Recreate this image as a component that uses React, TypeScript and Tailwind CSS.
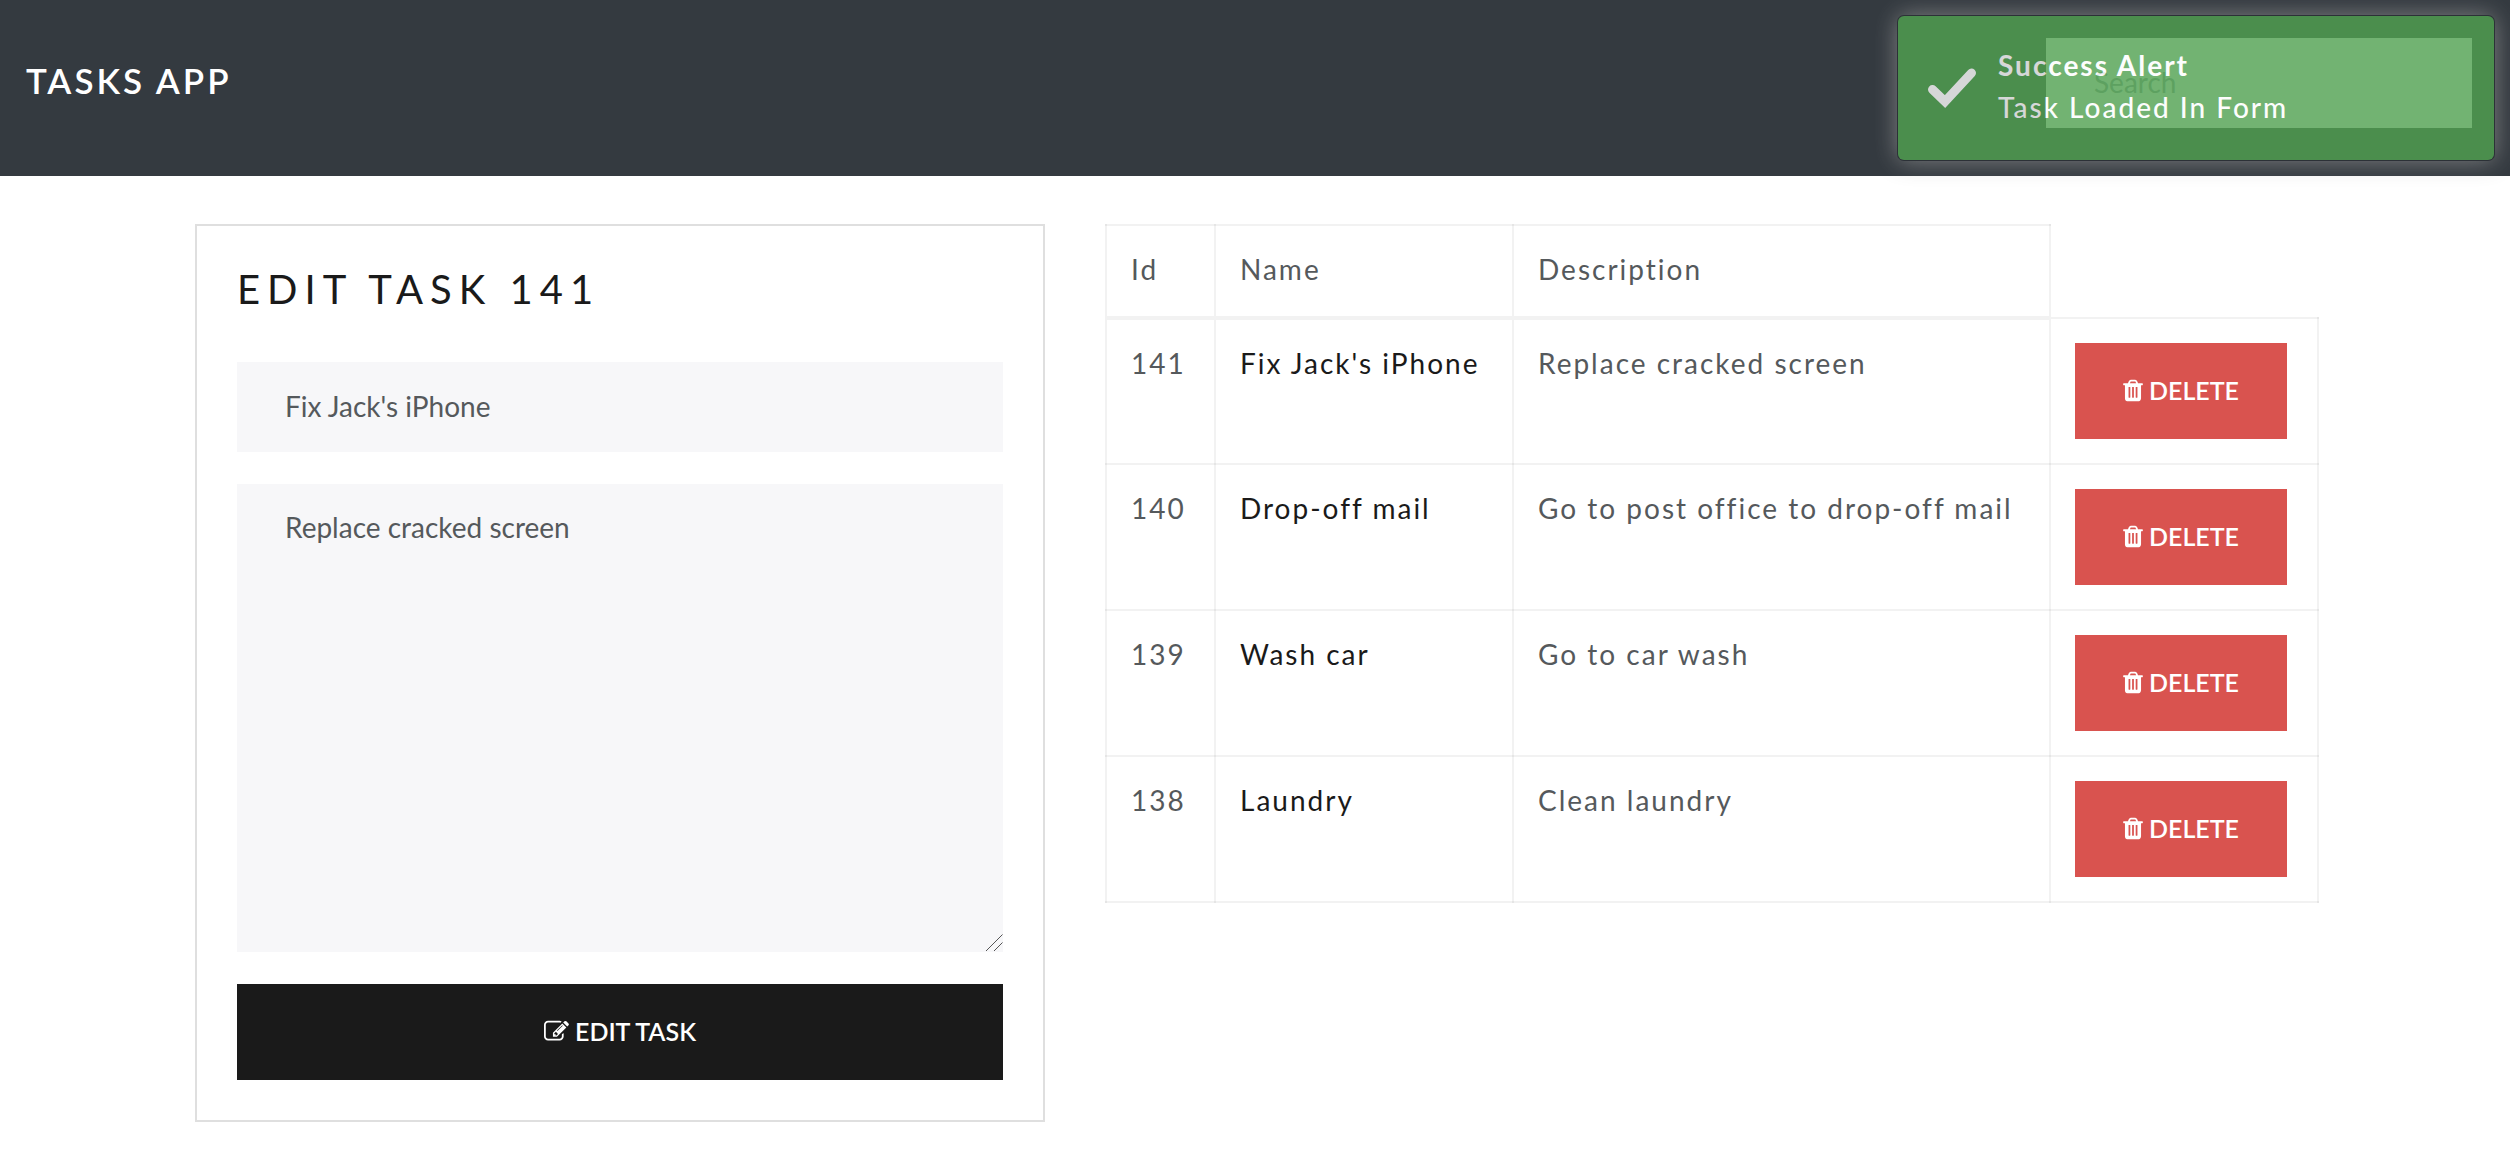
type Task = { id: number; name: string; description: string };

const tasks: Task[] = [
  { id: 141, name: "Fix Jack's iPhone", description: "Replace cracked screen" },
  { id: 140, name: "Drop-off mail", description: "Go to post office to drop-off mail" },
  { id: 139, name: "Wash car", description: "Go to car wash" },
  { id: 138, name: "Laundry", description: "Clean laundry" },
];

function TrashIcon() {
  return (
    <svg viewBox="0 0 1408 1792" className="h-[25px] w-5 fill-current" aria-hidden="true">
      <path d="M512 1376v-704q0-14-9-23t-23-9h-64q-14 0-23 9t-9 23v704q0 14 9 23t23 9h64q14 0 23-9t9-23zM768 1376v-704q0-14-9-23t-23-9h-64q-14 0-23 9t-9 23v704q0 14 9 23t23 9h64q14 0 23-9t9-23zM1024 1376v-704q0-14-9-23t-23-9h-64q-14 0-23 9t-9 23v704q0 14 9 23t23 9h64q14 0 23-9t9-23zM480 384h448l-48-117q-7-9-17-11h-317q-10 2-17 11zM1408 416v64q0 14-9 23t-23 9h-96v948q0 83-47 143.500t-113 60.500h-832q-66 0-113-58.500t-47-141.500v-952h-96q-14 0-23-9t-9-23v-64q0-14 9-23t23-9h309l70-167q15-37 54-63t79-26h320q40 0 79 26t54 63l70 167h309q14 0 23 9t9 23z" />
    </svg>
  );
}

function EditIcon() {
  return (
    <svg viewBox="0 0 1792 1792" className="size-[25px] fill-current" aria-hidden="true">
      <path d="M888 1184l116-116-152-152-116 116v56h96v96h56zM1328 464q-16-16-33 1l-350 350q-17 17-1 33t33-1l350-350q17-17 1-33zM1408 1058v190q0 119-84.500 203.500t-203.500 84.500h-832q-119 0-203.500-84.500t-84.500-203.500v-832q0-119 84.500-203.500t203.500-84.500h832q63 0 117 25 15 7 18 23 3 17-9 29l-49 49q-14 14-32 8-23-6-45-6h-832q-66 0-113 47t-47 113v832q0 66 47 113t113 47h832q66 0 113-47t47-113v-126q0-13 9-22l64-64q15-15 35-7t20 29zM1312 320l288 288-672 672h-288v-288zM1756 452l-92 92-288-288 92-92q28-28 68-28t68 28l152 152q28 28 28 68t-28 68z" />
    </svg>
  );
}

function Toast() {
  return (
    <div
      role="alert"
      className="absolute top-4 right-4 flex w-[596px] items-center gap-[22px] rounded-md bg-[#51a351] px-[30px] pt-7 pb-8 tracking-[2px] text-white opacity-80 shadow-[0_0_0_1px_#2b2f36,0_0_24px_#999]"
    >
      <svg viewBox="0 0 48 48" className="size-12" aria-hidden="true">
        <path d="M4.500 27.500 17 39.500 43.500 11" fill="none" stroke="currentColor" strokeWidth="9" strokeLinecap="round" />
      </svg>
      <div>
        <p className="font-bold">Success Alert</p>
        <p className="font-medium">Task Loaded In Form</p>
      </div>
    </div>
  );
}

export default function App() {
  return (
    <div className="relative bg-white font-[Lato,sans-serif] text-[28px] leading-[42px] font-normal text-[#55595c]">
      <header className="flex h-44 items-center justify-between bg-[#343a40] pr-[38px] pl-[26px]">
        <a href="#" className="pb-4 text-[35px] leading-[52px] font-semibold tracking-[3px] text-white uppercase">
          Tasks App
        </a>
        <input
          type="search"
          aria-label="Search"
          placeholder="Search"
          className="mb-[10px] h-[90px] w-[426px] bg-[#f7f7f9] px-12 pb-0.5 placeholder:text-[#919aa1]"
        />
      </header>

      <main className="grid grid-cols-[850fr_1214fr] items-start gap-[60px] pt-12 pr-[191px] pb-[42px] pl-[195px]">
        <section className="border-2 border-[#dfdfdf] p-10">
          <h1 className="mb-[50px] text-[40px] leading-[46px] font-normal tracking-[7px] text-[#1a1a1a] uppercase">
            Edit Task 141
          </h1>
          <form className="flex flex-col gap-8">
            <input
              type="text"
              aria-label="Task name"
              defaultValue="Fix Jack's iPhone"
              className="h-[90px] w-full bg-[#f7f7f9] px-12 pb-0.5"
            />
            <div className="relative flex">
              <textarea
                aria-label="Task description"
                defaultValue="Replace cracked screen"
                className="h-[468px] w-full resize-none bg-[#f7f7f9] px-12 pt-[22px] pb-6"
              />
              <svg viewBox="0 0 18 18" className="absolute right-0 bottom-0 size-[18px]" aria-hidden="true">
                <path d="M1 17 17.500 .5M9 17l8.500-8.500" fill="none" stroke="#555" strokeWidth="1" />
              </svg>
            </div>
            <button
              type="button"
              className="flex h-24 w-full items-center justify-center gap-1.5 bg-[#1a1a1a] pb-0.5 text-[25px] font-semibold text-white uppercase"
            >
              <EditIcon />
              Edit Task
            </button>
          </form>
        </section>

        <table className="w-full table-fixed border-collapse text-left tracking-[2px]">
          <colgroup>
            <col className="w-[109px]" />
            <col className="w-[298px]" />
            <col className="w-[537px]" />
            <col />
          </colgroup>
          <thead>
            <tr>
              {["Id", "Name", "Description"].map((label) => (
                <th key={label} scope="col" className="border-2 border-b-4 border-black/5 px-6 pt-[22px] pb-[26px] font-normal">
                  {label}
                </th>
              ))}
            </tr>
          </thead>
          <tbody>
            {tasks.map((task) => (
              <tr key={task.id} className="align-top">
                <td className="border-2 border-black/5 px-6 pt-[22px]">{task.id}</td>
                <td className="border-2 border-black/5 px-6 pt-[22px]">
                  <a href="#" className="whitespace-nowrap text-[#1a1a1a]">{task.name}</a>
                </td>
                <td className="border-2 border-black/5 px-6 pt-[22px] whitespace-nowrap">{task.description}</td>
                <td className="border-2 border-black/5 p-6">
                  <button
                    type="button"
                    className="flex h-24 items-center gap-1.5 bg-[#d9534f] px-12 pb-0.5 text-[25px] font-semibold tracking-normal text-white uppercase"
                  >
                    <TrashIcon />
                    Delete
                  </button>
                </td>
              </tr>
            ))}
          </tbody>
        </table>
      </main>

      <Toast />
    </div>
  );
}
